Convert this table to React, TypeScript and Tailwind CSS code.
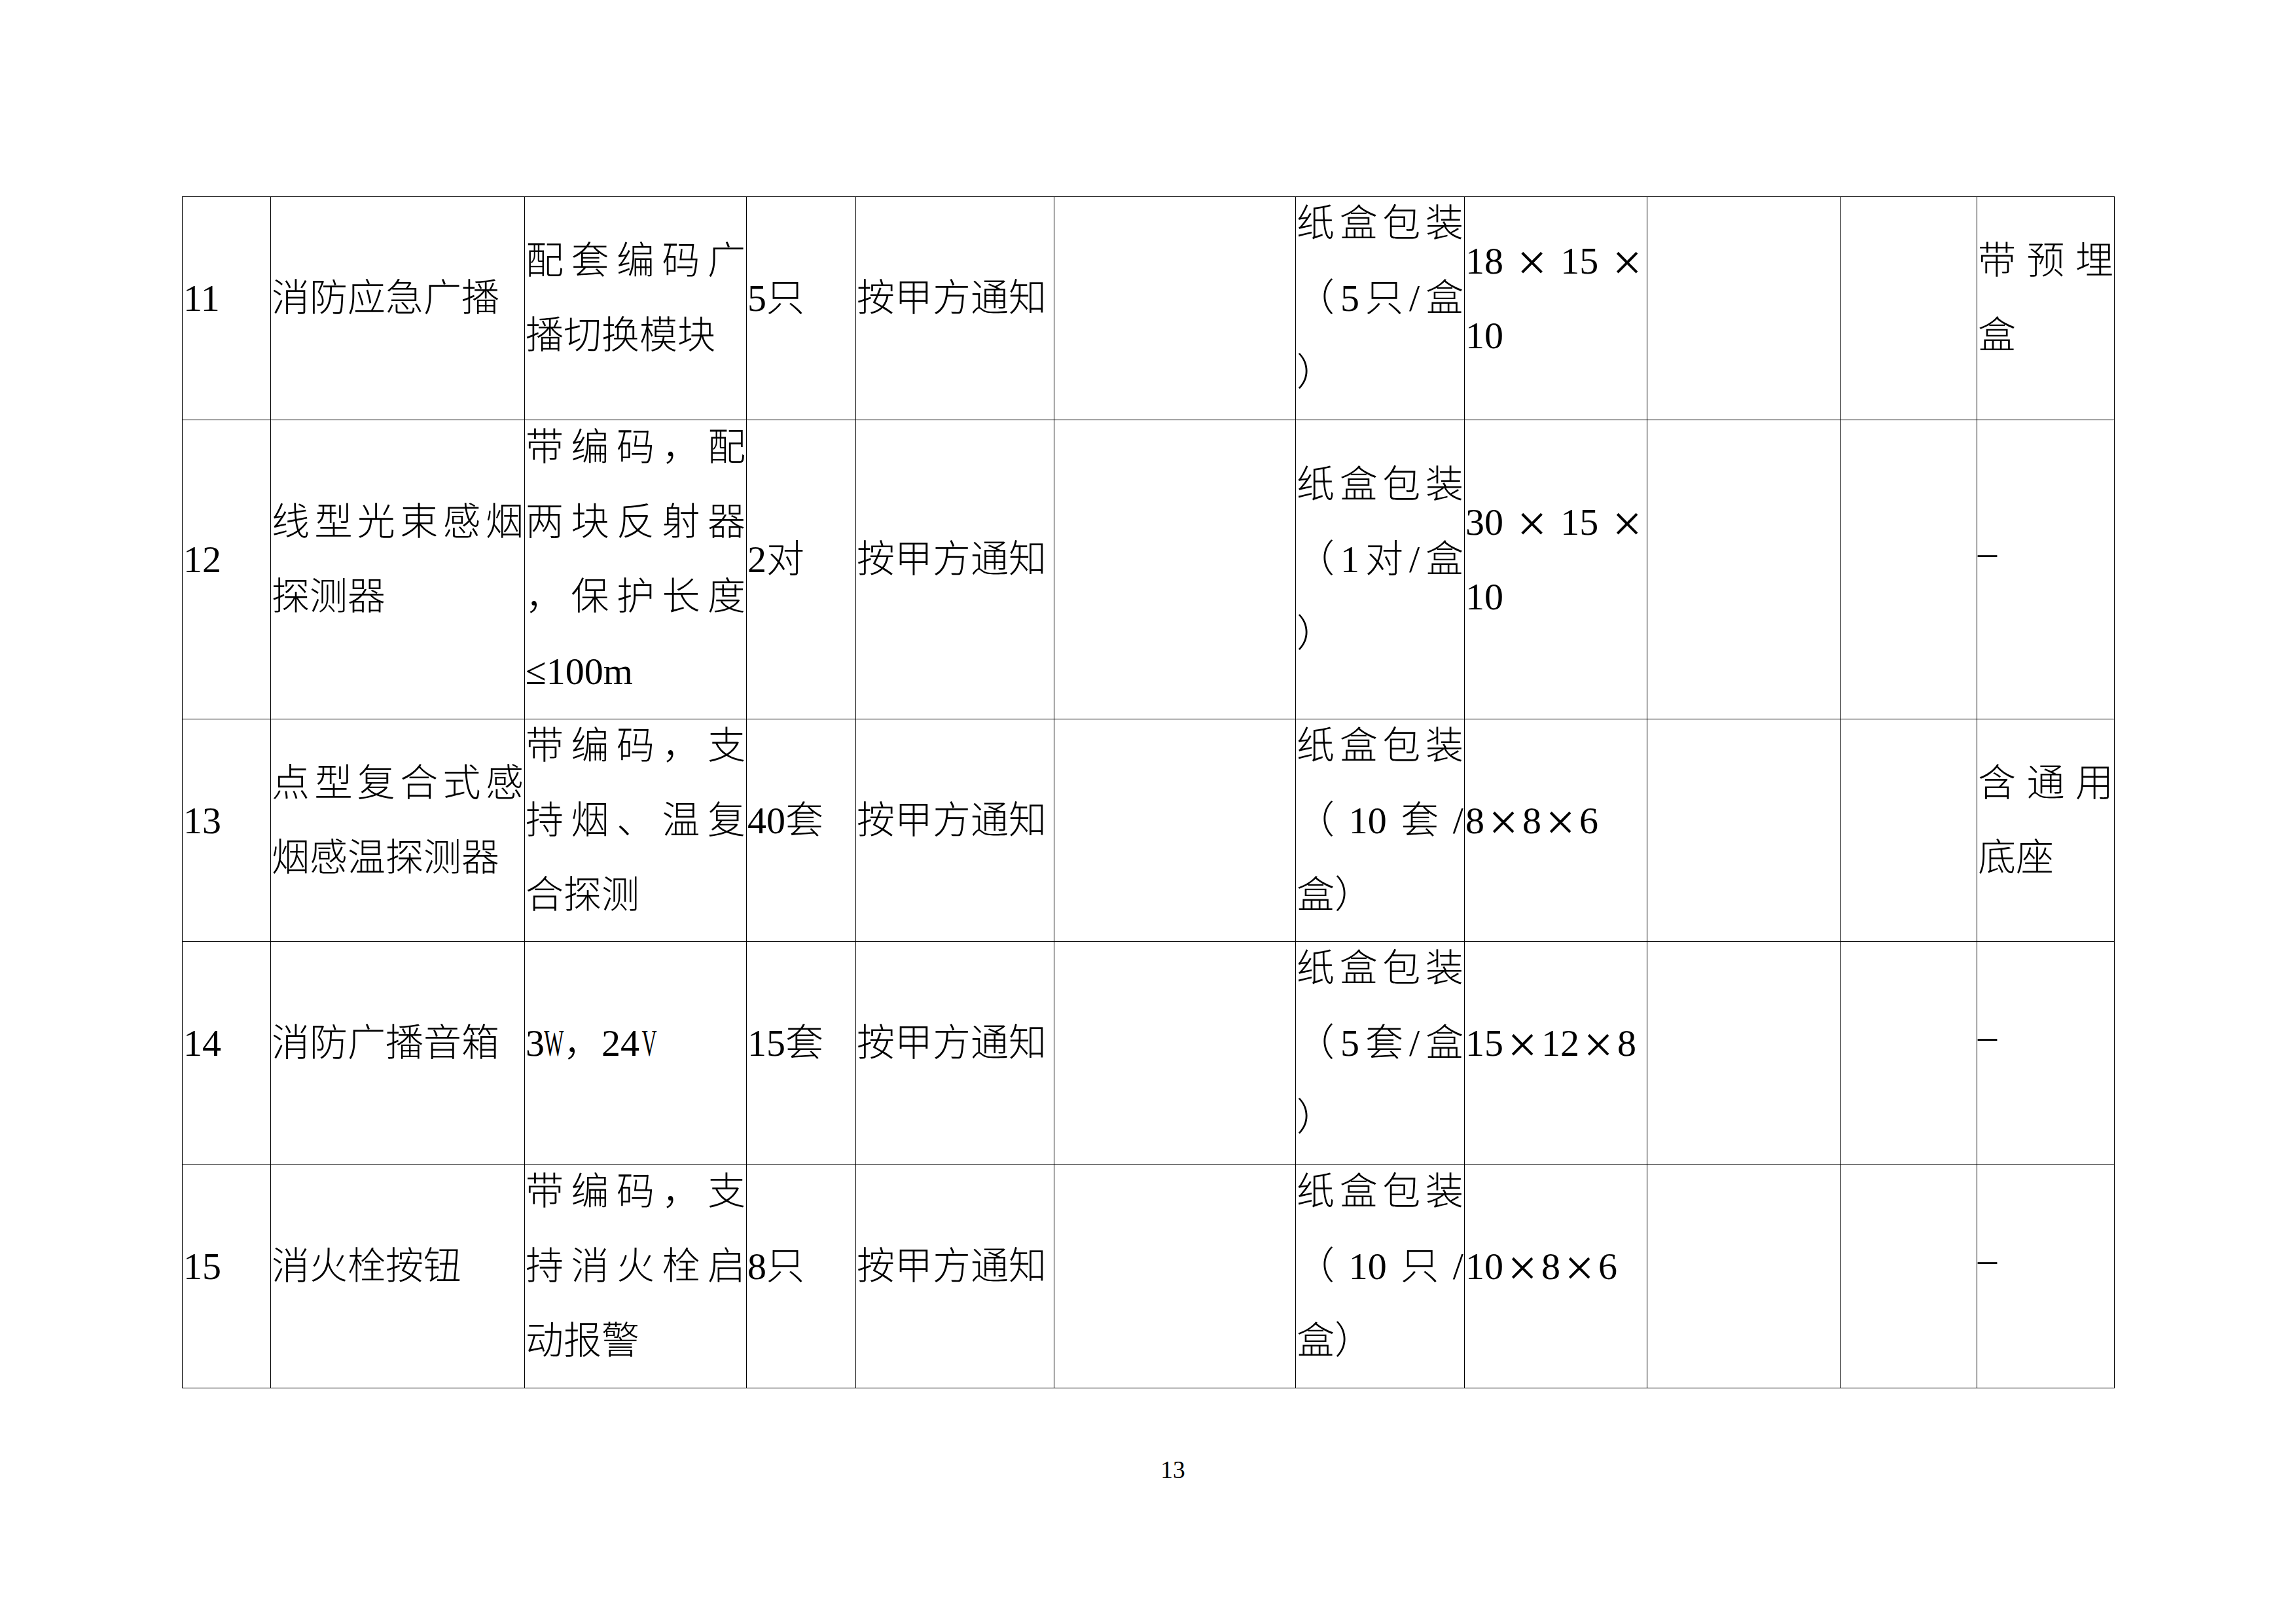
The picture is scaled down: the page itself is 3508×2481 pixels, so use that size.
import React from "react";

type Line = { j?: boolean; parts: React.ReactNode[] };

const X = () => (
  <span className="inline-block w-[58px] text-center">
    <span className="align-[-10px] text-[80px] leading-[0]">×</span>
  </span>
);
const NW = ({ c }: { c: string }) => (
  <span className="inline-flex w-[29px] justify-center">
    <span className="inline-block scale-x-55">{c}</span>
  </span>
);
const Dash = () => <span className="leading-[0] align-[11px]">–</span>;

const J = (...parts: React.ReactNode[]): Line => ({ j: true, parts });
const P = (...parts: React.ReactNode[]): Line => ({ parts });
const ch = (s: string) => Array.from(s);

const rows: Line[][][] = [
  [
    [P("11")],
    [P("消防应急广播")],
    [J(...ch("配套编码广")), P("播切换模块")],
    [P("5只")],
    [P("按甲方通知")],
    [],
    [J(...ch("纸盒包装")), J("（", "5", "只", "/", "盒"), P("）")],
    [J("18", <X />, "15", <X />), P("10")],
    [],
    [],
    [J("带", "预", "埋"), P("盒")],
  ],
  [
    [P("12")],
    [J(...ch("线型光束感烟")), P("探测器")],
    [J(...ch("带编码，配")), J(...ch("两块反射器")), J(...ch("，保护长度")), P("≤100m")],
    [P("2对")],
    [P("按甲方通知")],
    [],
    [J(...ch("纸盒包装")), J("（", "1", "对", "/", "盒"), P("）")],
    [J("30", <X />, "15", <X />), P("10")],
    [],
    [],
    [P(<Dash />)],
  ],
  [
    [P("13")],
    [J(...ch("点型复合式感")), P("烟感温探测器")],
    [J(...ch("带编码，支")), J(...ch("持烟、温复")), P("合探测")],
    [P("40套")],
    [P("按甲方通知")],
    [],
    [J(...ch("纸盒包装")), J("（", "10", "套", "/"), P("盒）")],
    [P("8", <X />, "8", <X />, "6")],
    [],
    [],
    [J("含", "通", "用"), P("底座")],
  ],
  [
    [P("14")],
    [P("消防广播音箱")],
    [P("3", <NW c="W" />, "，24", <NW c="V" />)],
    [P("15套")],
    [P("按甲方通知")],
    [],
    [J(...ch("纸盒包装")), J("（", "5", "套", "/", "盒"), P("）")],
    [P("15", <X />, "12", <X />, "8")],
    [],
    [],
    [P(<Dash />)],
  ],
  [
    [P("15")],
    [P("消火栓按钮")],
    [J(...ch("带编码，支")), J(...ch("持消火栓启")), P("动报警")],
    [P("8只")],
    [P("按甲方通知")],
    [],
    [J(...ch("纸盒包装")), J("（", "10", "只", "/"), P("盒）")],
    [P("10", <X />, "8", <X />, "6")],
    [],
    [],
    [P(<Dash />)],
  ],
];

function Cell({ lines }: { lines: Line[] }) {
  return (
    <div className="flex min-w-0 flex-col justify-center border-r border-b border-black px-[1px]">
      {lines.map((ln, i) =>
        ln.j ? (
          <div key={i} className="flex h-[114px] shrink-0 justify-between leading-[84px] whitespace-nowrap">
            {ln.parts.map((p, k) => (
              <span key={k}>{p}</span>
            ))}
          </div>
        ) : (
          <div key={i} className="h-[114px] shrink-0 leading-[84px] whitespace-nowrap">
            {ln.parts.map((p, k) => (
              <React.Fragment key={k}>{p}</React.Fragment>
            ))}
          </div>
        )
      )}
    </div>
  );
}

export default function App() {
  return (
    <div className="h-[2481px] w-[3508px] overflow-hidden bg-white pt-[300px] font-['Liberation_Serif','Noto_Sans_CJK_SC',serif] text-[58px] font-light text-black">
      <div className="ml-[278px] grid w-max grid-cols-[135px_388px_339px_167px_303px_369px_258px_279px_296px_208px_210px] grid-rows-[341px_457px_340px_341px_341px] border-t border-l border-black">
        {rows.map((r, ri) => r.map((c, ci) => <Cell key={`${ri}-${ci}`} lines={c} />))}
      </div>
      <div className="mt-[103px] pl-[76px] text-center text-[37.5px] leading-[44px]">13</div>
    </div>
  );
}
